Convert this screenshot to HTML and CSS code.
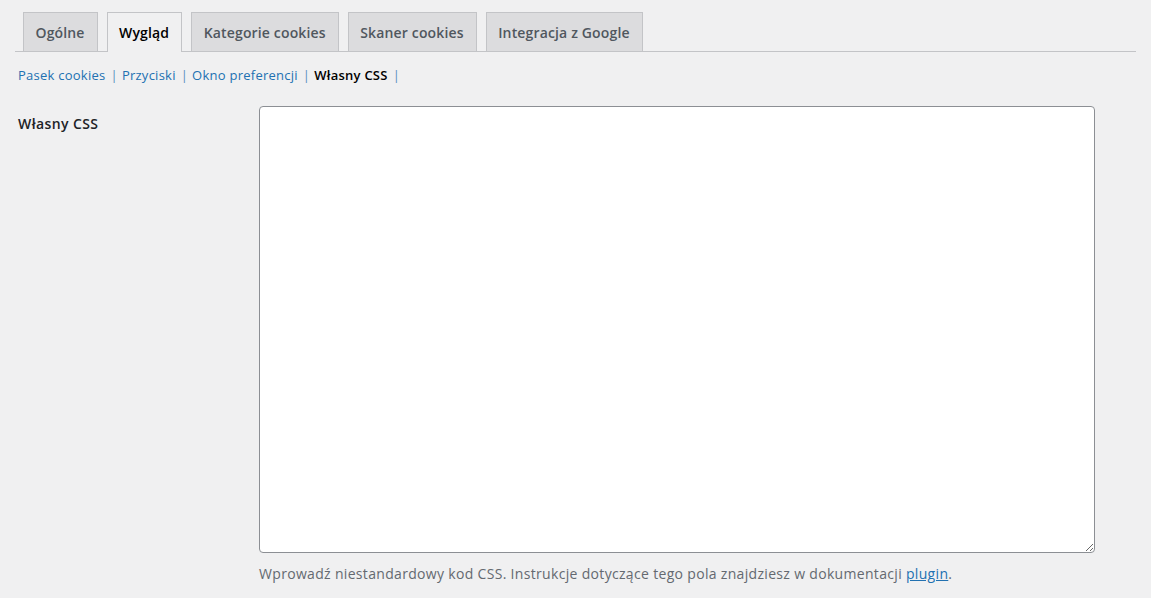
FILE: index.html
```html
<!DOCTYPE html>
<html lang="pl">
<head>
<meta charset="utf-8">
<link rel="stylesheet" href="styles.css">
</head>
<body>
<div class="wrap">
  <nav class="tabs">
    <a class="tab">Ogólne</a>
    <a class="tab active">Wygląd</a>
    <a class="tab">Kategorie cookies</a>
    <a class="tab">Skaner cookies</a>
    <a class="tab">Integracja z Google</a>
  </nav>
  <ul class="subnav">
    <li><a class="sublink">Pasek cookies</a><span class="sep">|</span></li>
    <li><a class="sublink">Przyciski</a><span class="sep">|</span></li>
    <li><a class="sublink">Okno preferencji</a><span class="sep">|</span></li>
    <li><span class="current">Własny CSS</span><span class="sep">|</span></li>
  </ul>
  <div class="row">
    <div class="label">Własny CSS</div>
    <div class="field">
      <textarea class="css-input"></textarea>
      <p class="desc">Wprowadź niestandardowy kod CSS. Instrukcje dotyczące tego pola znajdziesz w dokumentacji <a class="link">plugin</a>.</p>
    </div>
  </div>
</div>
</body>
</html>
```
FILE: styles.css
```css
html, body {
  margin: 0;
  padding: 0;
  background: #f0f0f1;
}
body {
  font-family: "Open Sans", "Noto Sans", sans-serif;
  color: #3c434a;
  font-size: 13px;
}
.wrap {
  padding: 12px 15px 0 15px;
}
.tabs {
  display: flex;
  align-items: flex-end;
  gap: 9px;
  padding-left: 8px;
  border-bottom: 1px solid #c3c4c7;
  height: 39px;
}
.tab {
  box-sizing: border-box;
  height: 39px;
  padding: 0 12px 0 11.5px;
  display: flex;
  align-items: center;
  font-size: 14px;
  font-weight: 600;
  color: #50575e;
  background: #dcdcde;
  border: 1px solid #c3c4c7;
  border-bottom: none;
  letter-spacing: 0.15px;
}
.tab.active {
  background: #f0f0f1;
  color: #000;
  height: 40px;
  margin-bottom: -1px;
}
.subnav {
  list-style: none;
  margin: 0;
  padding: 13px 0 0 3px;
  display: flex;
  height: 20px;
  align-items: center;
  font-size: 13px;
  letter-spacing: 0.25px;
}
.subnav li {
  display: flex;
}
.sublink {
  color: #2271b1;
}
.current {
  color: #000;
  font-weight: 600;
}
.sep {
  color: #5a8fc0;
  margin: 0 4px 0 5px;
}
.row {
  display: flex;
  margin-top: 21px;
  padding-left: 3px;
}
.label {
  width: 241px;
  font-size: 14px;
  font-weight: 600;
  color: #1d2327;
  padding-top: 8px;
  letter-spacing: 0.4px;
}
.field {
  display: flex;
  flex-direction: column;
}
.css-input {
  box-sizing: border-box;
  width: 836px;
  height: 447px;
  border: 1px solid #8c8f94;
  border-radius: 4px;
  background: #fff;
  margin: 0;
  resize: vertical;
}
.desc {
  margin: 11px 0 0 0;
  font-size: 14px;
  color: #646970;
  letter-spacing: 0.32px;
}
.link {
  color: #2271b1;
  text-decoration: underline;
}
```
